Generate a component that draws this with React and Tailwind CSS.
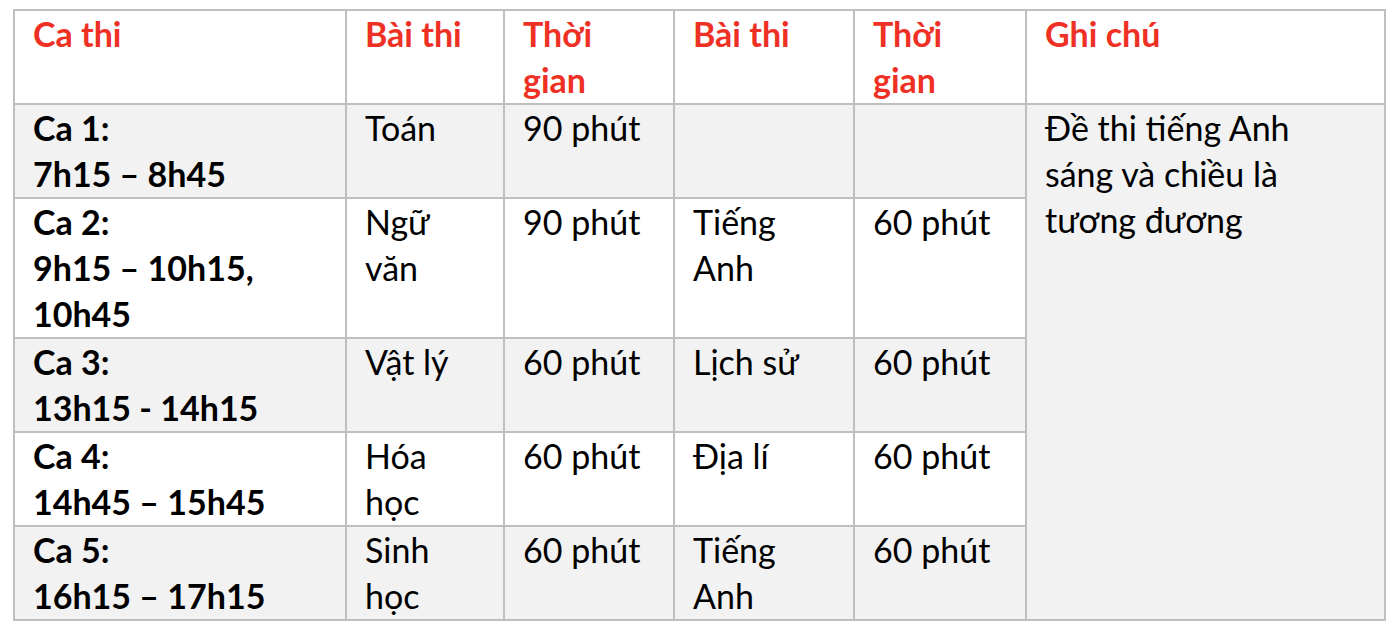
import React from 'react';

const rows = [
    { ca: ['Ca 1:', '7h15 – 8h45'], bai1: ['Toán'], tg1: '90 phút', bai2: [], tg2: '', bg: 'bg-[#f2f2f2]' },
    { ca: ['Ca 2:', '9h15 – 10h15,', '10h45'], bai1: ['Ngữ', 'văn'], tg1: '90 phút', bai2: ['Tiếng', 'Anh'], tg2: '60 phút', bg: 'bg-white' },
    { ca: ['Ca 3:', '13h15 - 14h15'], bai1: ['Vật lý'], tg1: '60 phút', bai2: ['Lịch sử'], tg2: '60 phút', bg: 'bg-[#f2f2f2]' },
    { ca: ['Ca 4:', '14h45 – 15h45'], bai1: ['Hóa', 'học'], tg1: '60 phút', bai2: ['Địa lí'], tg2: '60 phút', bg: 'bg-white' },
    { ca: ['Ca 5:', '16h15 – 17h15'], bai1: ['Sinh', 'học'], tg1: '60 phút', bai2: ['Tiếng', 'Anh'], tg2: '60 phút', bg: 'bg-[#f2f2f2]' },
];

const Lines = ({ items }) => (
    <>
        {items.map((t, i) => (
            <div key={i} className="whitespace-nowrap">{t}</div>
        ))}
    </>
);

const cell = 'border-2 border-[#bfbfbf] align-top pl-[18px] pr-2 pt-0 pb-0';

const App = () => {
    return (
        <div className="w-[1398px] h-[632px] bg-white pt-[9px] pl-[13px]" style={{ fontFamily: 'Lato, "Noto Sans", sans-serif' }}>
            <table className="border-collapse table-fixed w-[1371px] text-[34px] leading-[46px] text-black">
                <colgroup>
                    <col className="w-[332px]" />
                    <col className="w-[158px]" />
                    <col className="w-[170px]" />
                    <col className="w-[180px]" />
                    <col className="w-[172px]" />
                    <col className="w-[359px]" />
                </colgroup>
                <thead>
                    {/* header row */}
                    <tr className="bg-white text-[#ee3124] font-bold">
                        <th className={cell + ' text-left font-bold'}>Ca thi</th>
                        <th className={cell + ' text-left font-bold'}>Bài thi</th>
                        <th className={cell + ' text-left font-bold'}><Lines items={['Thời', 'gian']} /></th>
                        <th className={cell + ' text-left font-bold'}>Bài thi</th>
                        <th className={cell + ' text-left font-bold'}><Lines items={['Thời', 'gian']} /></th>
                        <th className={cell + ' text-left font-bold'}>Ghi chú</th>
                    </tr>
                </thead>
                <tbody>
                    {rows.map((r, i) => (
                        <tr key={i} className={r.bg}>
                            <td className={cell + ' font-bold'}><Lines items={r.ca} /></td>
                            <td className={cell}><Lines items={r.bai1} /></td>
                            <td className={cell}>{r.tg1}</td>
                            <td className={cell}><Lines items={r.bai2} /></td>
                            <td className={cell}>{r.tg2}</td>
                            {i === 0 && (
                                <td rowSpan={5} className={cell + ' bg-[#f2f2f2]'}>
                                    <Lines items={['Đề thi tiếng Anh', 'sáng và chiều là', 'tương đương']} />
                                </td>
                            )}
                        </tr>
                    ))}
                </tbody>
            </table>
        </div>
    );
};

export default App;
